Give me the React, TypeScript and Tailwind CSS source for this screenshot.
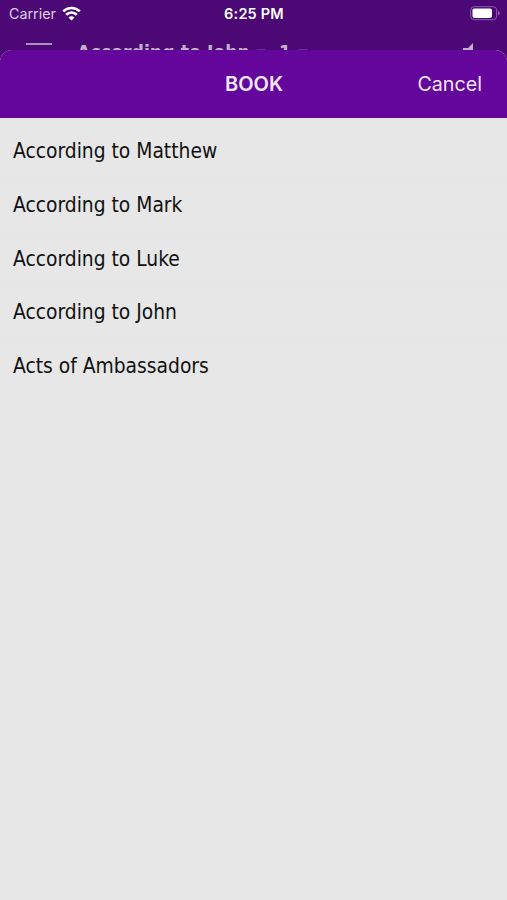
import clsx from 'clsx'

const books = [
  'According to Matthew',
  'According to Mark',
  'According to Luke',
  'According to John',
  'Acts of Ambassadors',
]

function WifiIcon() {
  return (
    <svg width="19" height="15" viewBox="0 0 19 15" fill="none" stroke="#fff" strokeWidth="2.7">
      <path d="M1.2 5.4a11.8 11.8 0 0 1 16.6 0" />
      <path d="M4.2 8.7a7.5 7.5 0 0 1 10.6 0" />
      <path d="M9.5 14.4 6.5 11.4a4.2 4.2 0 0 1 6 0Z" fill="#fff" stroke="none" />
    </svg>
  )
}

function BatteryIcon() {
  return (
    <svg width="31" height="15" viewBox="0 0 31 15" fill="none">
      <rect x="0.7" y="0.7" width="26" height="13" rx="3.5" stroke="#8f5fb0" strokeWidth="1" />
      <rect x="2.5" y="2.5" width="19.5" height="9.4" rx="1.8" fill="#fff" />
      <path d="M28 5v4.4c1.2-.4 1.8-1.3 1.8-2.2S29.2 5.4 28 5Z" fill="#8f5fb0" />
    </svg>
  )
}

function CaretIcon() {
  return (
    <svg className="mt-[8px] shrink-0" width="12" height="7" viewBox="0 0 12 7">
      <path d="M1 0h10L6 6Z" fill="#683088" />
    </svg>
  )
}

function StatusBar() {
  return (
    <div className="grid h-[27px] grid-cols-3 items-center text-white">
      <div className="flex items-center gap-[6px] pl-[9px]">
        <span className="text-[14.3px] leading-[27px] text-[#dccfe6]">Carrier</span>
        <WifiIcon />
      </div>
      <span className="pl-px text-center text-[14.5px] leading-[27px] font-semibold tracking-[0.2px]">
        6:25 PM
      </span>
      <div className="flex justify-end pr-[6px]">
        <BatteryIcon />
      </div>
    </div>
  )
}

/** The reader's toolbar, mostly hidden behind the sheet */
function ReaderBar() {
  return (
    <div className="flex h-[23px] items-start overflow-hidden text-[#bfb3c8]">
      <div className="mt-4 ml-[26px] h-[1.5px] w-[26px] shrink-0 bg-[#ab8fbd]" />
      <div className="ml-[25px] flex w-[386px] shrink-0 items-start pt-[14px] font-['DejaVu_Sans_Condensed','DejaVu_Sans',sans-serif] text-[19.3px] leading-[24px] font-bold whitespace-pre">
        <span className="w-[178px]">According to John</span>
        <CaretIcon />
        <span className="ml-[12px] w-[18px]">1</span>
        <CaretIcon />
      </div>
      <svg className="mt-4 shrink-0" width="14" height="16" viewBox="0 0 14 16">
        <path d="M0 5h5l5-5v16l-5-5H0Z" fill="currentColor" />
      </svg>
    </div>
  )
}

export default function App() {
  return (
    <div className="flex h-[900px] w-[507px] flex-col overflow-hidden bg-[#4c0874] font-['Inter','Liberation_Sans',sans-serif]">
      <StatusBar />
      <ReaderBar />
      <div className="flex flex-1 flex-col overflow-hidden rounded-t-[12px] bg-[#e7e7e7]">
        <div className="grid h-[68px] shrink-0 grid-cols-3 items-center bg-[#64069c] text-[20px] text-[#f2e8f8]">
          <span />
          <h1 className="pl-px text-center font-semibold">BOOK</h1>
          <button className="pt-[2px] pr-[25px] text-right text-[19.7px]">Cancel</button>
        </div>
        <ul className="pt-[7px] font-['DejaVu_Sans_Condensed','DejaVu_Sans',sans-serif] text-[20.8px] text-[#111]">
          {books.map((book, i) => (
            <li
              key={book}
              className={clsx('flex h-[53.6px] items-center pl-[13px]', i > 0 && 'border-t border-[#e5e5e5]')}
            >
              {book}
            </li>
          ))}
        </ul>
      </div>
    </div>
  )
}
